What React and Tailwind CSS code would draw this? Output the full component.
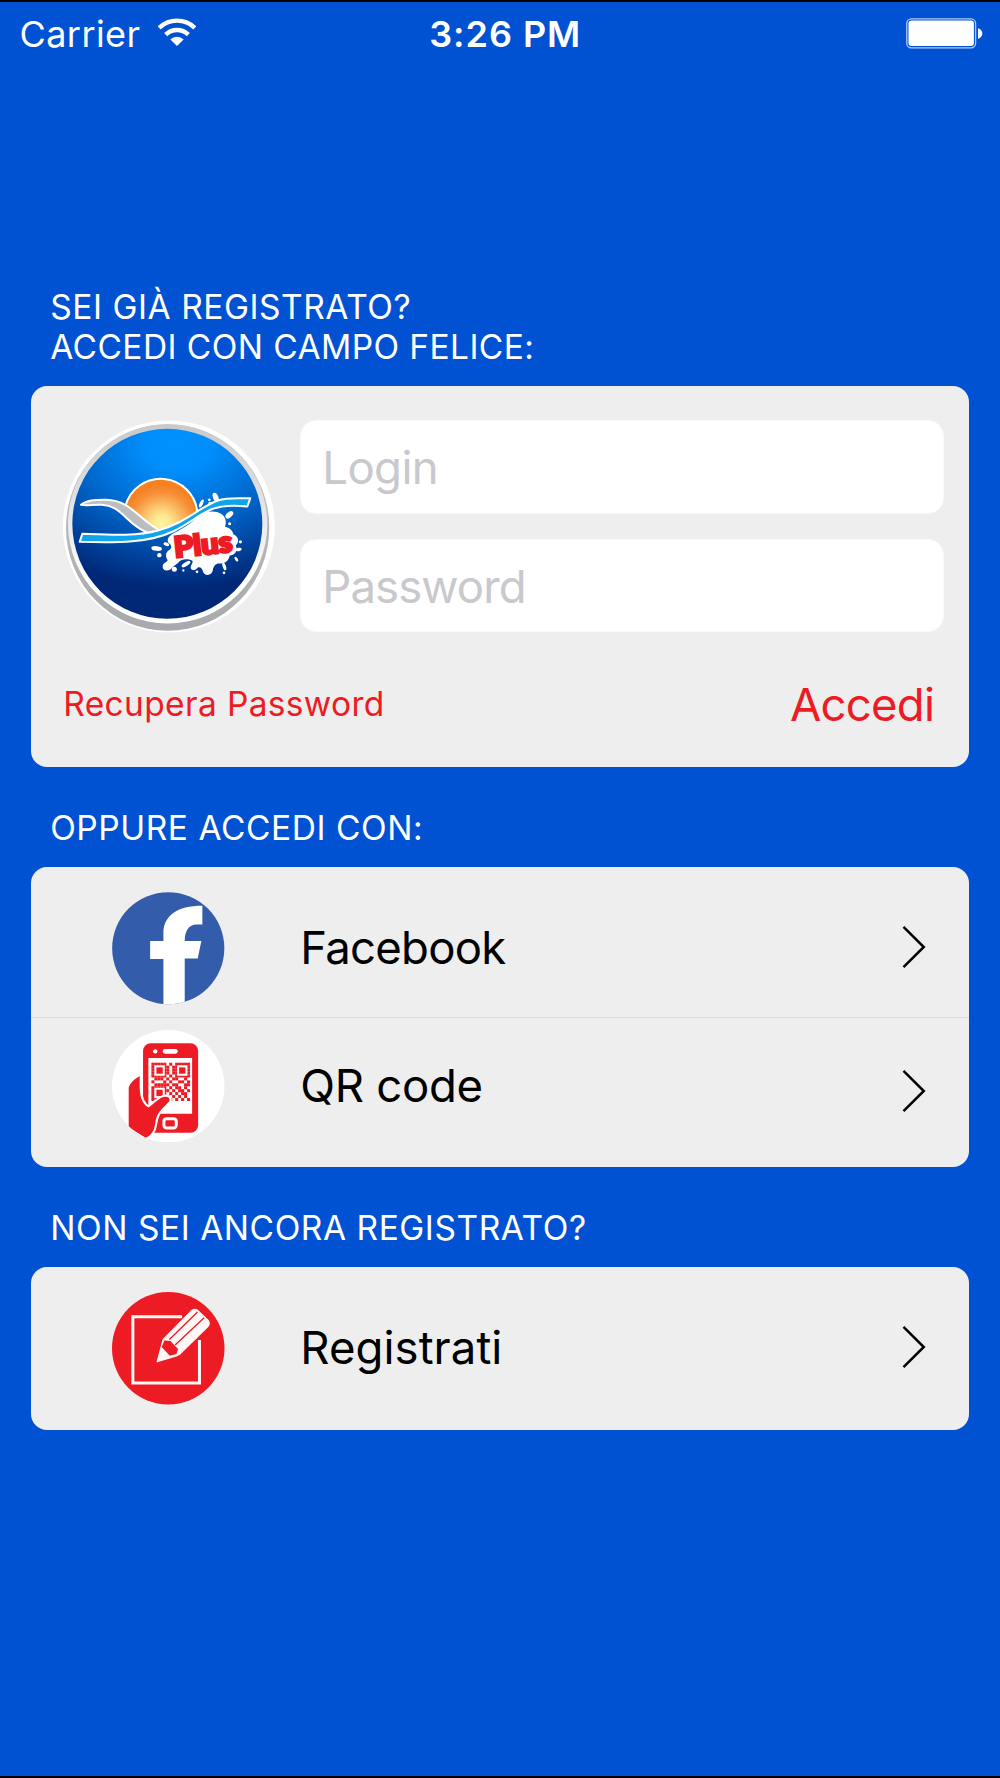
import classNames from "clsx"

const WifiIcon = () => (
    <svg className="ml-[17px] mb-[5px] h-[28px] w-[38px]" viewBox="470 54 114 84" fill="none" stroke="white" strokeWidth="13">
        <path d="M473.500 83.500A77 77 0 0 1 580.500 83.500" />
        <path d="M493 104A48.500 48.500 0 0 1 561 104" />
        <path d="M527 138L507 118.500A28 28 0 0 1 547 118.500Z" fill="white" stroke="none" />
    </svg>
)

const BatteryIcon = () => (
    <svg className="mb-[2px] h-[31px] w-[78px]" viewBox="0 0 78 31">
        <rect x="0.800" y="0.800" width="68.800" height="29" rx="4.500" fill="none" stroke="white" strokeOpacity="0.700" strokeWidth="1.300" />
        <rect x="2.500" y="2.500" width="65.400" height="25.600" rx="3" fill="white" />
        <path d="M72 10.300C74.800 11 76.300 13 76.300 15.500S74.800 20 72 20.700Z" fill="white" />
    </svg>
)

const Chevron = ({ className }) => (
    <svg className={classNames("h-[44px] w-[24px]", className)} viewBox="0 0 24 44" fill="none" stroke="black" strokeWidth="2.500">
        <path d="M1.500 1.800L21.800 22L1.500 42.200" />
    </svg>
)

const Logo = () => (
    <svg className="h-[213px] w-[212px]" viewBox="40 60 636 638">
        <defs>
            <linearGradient id="rim" x1="0" y1="0" x2="0" y2="1">
                <stop offset="0" stopColor="#c4c5c7" />
                <stop offset="1" stopColor="#a7a9ac" />
            </linearGradient>
            <linearGradient id="ring" x1="0" y1="0" x2="0" y2="1">
                <stop offset="0" stopColor="#c8c9cb" />
                <stop offset="0.600" stopColor="#f1f1f2" />
                <stop offset="0.800" stopColor="#ffffff" />
            </linearGradient>
            <radialGradient id="sky" gradientUnits="userSpaceOnUse" cx="0" cy="0" r="1" gradientTransform="translate(385 135) scale(560 430)">
                <stop offset="0" stopColor="#0092ff" />
                <stop offset="0.180" stopColor="#008efc" />
                <stop offset="0.550" stopColor="#0064c8" />
                <stop offset="0.800" stopColor="#00429c" />
                <stop offset="1" stopColor="#002877" />
            </radialGradient>
            <radialGradient id="sun" gradientUnits="userSpaceOnUse" cx="336" cy="372" r="118">
                <stop offset="0" stopColor="#fff6a0" />
                <stop offset="0.250" stopColor="#fee58c" />
                <stop offset="0.800" stopColor="#f7903a" />
                <stop offset="1" stopColor="#f58220" />
            </radialGradient>
        </defs>
        <circle cx="357.500" cy="379" r="318" fill="white" />
        <ellipse cx="354" cy="382" rx="305" ry="310" fill="url(#rim)" />
        <circle cx="354" cy="371" r="299" fill="url(#ring)" />
        <circle cx="353" cy="371" r="285" fill="url(#sky)" />

        <path d="M227 318A110 110 0 0 1 443 336Q400 372 325 392Q265 350 227 318Z" fill="url(#sun)" stroke="white" strokeWidth="6" />

        {/* water splash and its drops */}
        <g fill="white">
            <path d="M444 350C462 332 496 330 513 340C530 350 531 368 526 380C540 383 549 391 551 402C567 408 570 426 558 436C566 450 556 466 540 466C538 482 524 492 510 490C498 489 494 496 490 506C489 528 464 530 460 514C457 502 448 497 441 506C433 514 421 509 423 500C426 490 432 486 427 481C414 476 397 474 384 489C373 496 369 502 362 508C350 516 338 508 339 498C340 487 352 486 354 480C346 468 348 456 358 450C369 444 366 434 356 428C350 416 360 405 374 398C400 386 430 366 444 350Z" />
            <ellipse cx="498" cy="291" rx="8" ry="14" transform="rotate(-22 498 291)" />
            <ellipse cx="455" cy="310" rx="5" ry="13" transform="rotate(25 455 310)" />
            <circle cx="479" cy="299" r="4" />
            <circle cx="481" cy="310" r="5" />
            <ellipse cx="539" cy="344" rx="8" ry="14" transform="rotate(48 539 344)" />
            <circle cx="540" cy="371" r="4.500" />
            <circle cx="572" cy="425" r="5" />
            <ellipse cx="567" cy="448" rx="9" ry="5" transform="rotate(-10 567 448)" />
            <ellipse cx="560" cy="477" rx="4" ry="8" transform="rotate(-35 560 477)" />
            <ellipse cx="524" cy="499" rx="5" ry="12" transform="rotate(-18 524 499)" />
            <circle cx="523" cy="518" r="4" />
            <ellipse cx="409" cy="492" rx="15" ry="6" transform="rotate(-32 409 492)" />
            <circle cx="374" cy="507" r="7.500" />
            <circle cx="401" cy="511" r="3.500" />
            <circle cx="442" cy="515" r="4" />
            <ellipse cx="321" cy="445" rx="16" ry="7" transform="rotate(6 321 445)" />
            <circle cx="329" cy="465" r="6.500" />
            <ellipse cx="350" cy="432" rx="9" ry="5" transform="rotate(20 350 432)" />
        </g>

        <path d="M94 314C112 298 138 299 170 299C220 300 248 328 275 351C293 366 312 382 332 391L304 400C279 395 255 377 232 355C204 327 186 316 157 314C132 312 112 318 94 314Z" fill="#bcbdc0" stroke="white" strokeWidth="6" strokeLinejoin="round" />
        <path d="M98 401C180 404 260 409 325 391C405 370 450 320 505 301C532 291 565 295 602 294L593 319C550 314 518 314 484 328C440 348 415 373 370 394C300 427 210 429 90 425Z" fill="#0fa5ea" stroke="white" strokeWidth="6" strokeLinejoin="round" />

        <text
            transform="translate(376 472) rotate(-6)"
            textLength="175"
            lengthAdjust="spacingAndGlyphs"
            className="fill-[#ed1c24] stroke-[#ed1c24] font-['Lato',sans-serif] text-[86px] font-black"
            strokeWidth="8"
        >
            Plus
        </text>
    </svg>
)

const FacebookIcon = () => (
    <svg className="h-[112.500px] w-[112.500px]" viewBox="68 66 337 338">
        <clipPath id="fb"><circle cx="236.500" cy="235" r="168.500" /></clipPath>
        <g clipPath="url(#fb)">
            <path d="M60 60H410V410H60Z" fill="#335cab" />
            <path d="M222 410V267H182V213H222V190C222 137 263 107 339 107V164H322C298 164 286 184 286 213H336L325 266H286V410Z" fill="white" />
        </g>
    </svg>
)

// 1 = red module, the three finder squares are drawn over it
const qrRows = [
    "1111101011111",
    "1111110111111",
    "1111110111111",
    "1111110111111",
    "1111101011111",
    "0111010110010",
    "1000101001101",
    "0111110110011",
    "1111101011010",
    "1111110101101",
    "1111101010110",
    "1111110101010",
    "1111101010101",
]

const Finder = ({ x, y }) => (
    <rect x={x} y={y} width="25" height="25" fill="#ed1c24" stroke="white" strokeWidth="6" />
)

const QrIcon = () => (
    <svg className="h-[112.500px] w-[112.500px]" viewBox="38 29 337 337">
        <clipPath id="qr"><circle cx="206.500" cy="197.500" r="168.500" /></clipPath>
        <g clipPath="url(#qr)">
            <path d="M30 20H380V370H30Z" fill="white" />
            <rect x="131" y="69" width="165" height="268" rx="23" fill="#ed1c24" />
            <circle cx="167.500" cy="93" r="6.500" fill="white" />
            <rect x="190" y="86" width="45" height="14" rx="7" fill="white" />
            <path d="M147 113H278V280H147Z" fill="white" />
            {qrRows.map((row, y) => row.split("").map((cell, x) => cell === "1" && (
                <rect key={`${x}-${y}`} x={156 + x * 8.9} y={127 + y * 8.8} width="9.100" height="9" fill="#ed1c24" />
            )))}
            <Finder x={168} y={138} />
            <Finder x={236} y={138} />
            <Finder x={168} y={205} />
            <rect x="193.500" y="294.500" width="37" height="28" rx="8" fill="none" stroke="white" strokeWidth="9" />
            <path
                d="M121 167C105 176 92 188 88 202V320L138 352C155 345 164 332 167 311C169 291 176 277 186 267L209 243C214 234 206 228 196 229C178 232 163 251 148 261C134 256 121 236 121 200Z"
                fill="#ed1c24"
                stroke="white"
                strokeWidth="13"
                strokeLinejoin="round"
                paintOrder="stroke"
            />
        </g>
    </svg>
)

const RegisterIcon = () => (
    <svg className="h-[112.500px] w-[112.500px]" viewBox="23 21 337 337">
        <circle cx="191.500" cy="189.500" r="168.500" fill="#ed1c24" />
        <path d="M233 95H85.500V293.500H285V165" fill="none" stroke="#fff5f5" strokeWidth="9" />
        <path d="M158 230L176 163L262 76Q270 70 279 75L312 107Q317 116 311 124L228 206L216 213Z" fill="#fff8f8" stroke="#fff8f8" strokeWidth="3" strokeLinejoin="round" />
        <path d="M172 186L180 166L198 168L221 192L216 207L196 212Z" fill="#ed1c24" />
        <path d="M195 163L279 81M212 180L299 98" stroke="#ed1c24" strokeWidth="4" />
    </svg>
)

const Heading = ({ className, children }) => (
    <h2 className={classNames("pl-[50.2px] text-[33.5px] leading-[40.7px] tracking-[0.55px]", className)}>{children}</h2>
)

const Card = ({ className, children }) => (
    <div className={classNames("ml-[31.3px] w-[937.4px] rounded-[16px] bg-[#eeeeee] text-black", className)}>{children}</div>
)

const Row = ({ className, labelClass, chevronClass, icon, title }) => (
    <button type="button" className={classNames("flex w-full items-start pr-[43px] pl-[81px]", className)}>
        <span className="flex h-[112.5px] w-full items-center">
            {icon}
            <span className={classNames("ml-[75.500px] text-[45.5px] leading-[56px]", labelClass)}>{title}</span>
            <Chevron className={classNames("ml-auto", chevronClass)} />
        </span>
    </button>
)

const Field = ({ className, ...props }) => (
    <input
        className={classNames("block w-full rounded-[16px] border border-[#fafafa] bg-white px-[21px] pt-[2px] text-[45.5px] placeholder:text-[#c8c8cd] placeholder:opacity-100", className)}
        {...props}
    />
)

const App = () => (
    <div className="h-[1778px] w-[1000px] overflow-hidden border-y-2 border-black bg-[#0052d2] font-['Inter','Liberation_Sans',sans-serif] text-white">
        <header className="grid h-[64px] grid-cols-3 items-center pr-[16px] pl-[19.5px]">
            <div className="flex items-center text-[36px] leading-[44px] tracking-[0.43px]">
                Carrier
                <WifiIcon />
            </div>
            <div className="pl-[7px] text-center text-[36px] leading-[44px] font-semibold tracking-[0.95px]">3:26 PM</div>
            <div className="flex justify-end"><BatteryIcon /></div>
        </header>

        <main>
            <section className="pt-[220.5px]">
                <Heading className="mb-[18px]">SEI GIÀ REGISTRATO?<br /><span className="tracking-[0.42px]">ACCEDI CON CAMPO FELICE:</span></Heading>
                <Card className="h-[381px] pt-[34px] pr-[25px] pl-[32px]">
                    <div className="flex justify-between">
                        <Logo />
                        <div className="w-[643.4px]">
                            <Field type="text" placeholder="Login" className="h-[94px] tracking-[-0.6px]" />
                            <Field type="password" placeholder="Password" className="mt-[25px] h-[93px] tracking-[-0.9px]" />
                        </div>
                    </div>
                    <div className="mt-[34px] flex h-[75px] items-center justify-between pr-[9.5px] text-[#ed1c24]">
                        <button type="button" className="text-[33.5px] tracking-[0.35px]">Recupera Password</button>
                        <button type="button" className="mt-[2px] text-[45.5px] tracking-[-0.75px]">Accedi</button>
                    </div>
                </Card>
            </section>

            <section className="pt-[41.5px]">
                <Heading className="mb-[18px]">OPPURE ACCEDI CON:</Heading>
                <Card className="h-[300px]">
                    <Row title="Facebook" icon={<FacebookIcon />} className="h-[150.5px] border-b border-[#d9dadf] pt-[25px]" labelClass="tracking-[-0.75px]" chevronClass="mb-[3px]" />
                    <Row title="QR code" icon={<QrIcon />} className="h-[149.5px] pt-[12px]" labelClass="tracking-[-0.28px]" chevronClass="mt-[10px]" />
                </Card>
            </section>

            <section className="pt-[40.5px]">
                <Heading className="mb-[19px]">NON SEI ANCORA REGISTRATO?</Heading>
                <Card className="h-[162.5px]">
                    <Row title="Registrati" icon={<RegisterIcon />} className="h-full pt-[25px]" labelClass="mb-[2px] tracking-[0.06px]" chevronClass="mb-[3.500px]" />
                </Card>
            </section>
        </main>
    </div>
)

export default App
